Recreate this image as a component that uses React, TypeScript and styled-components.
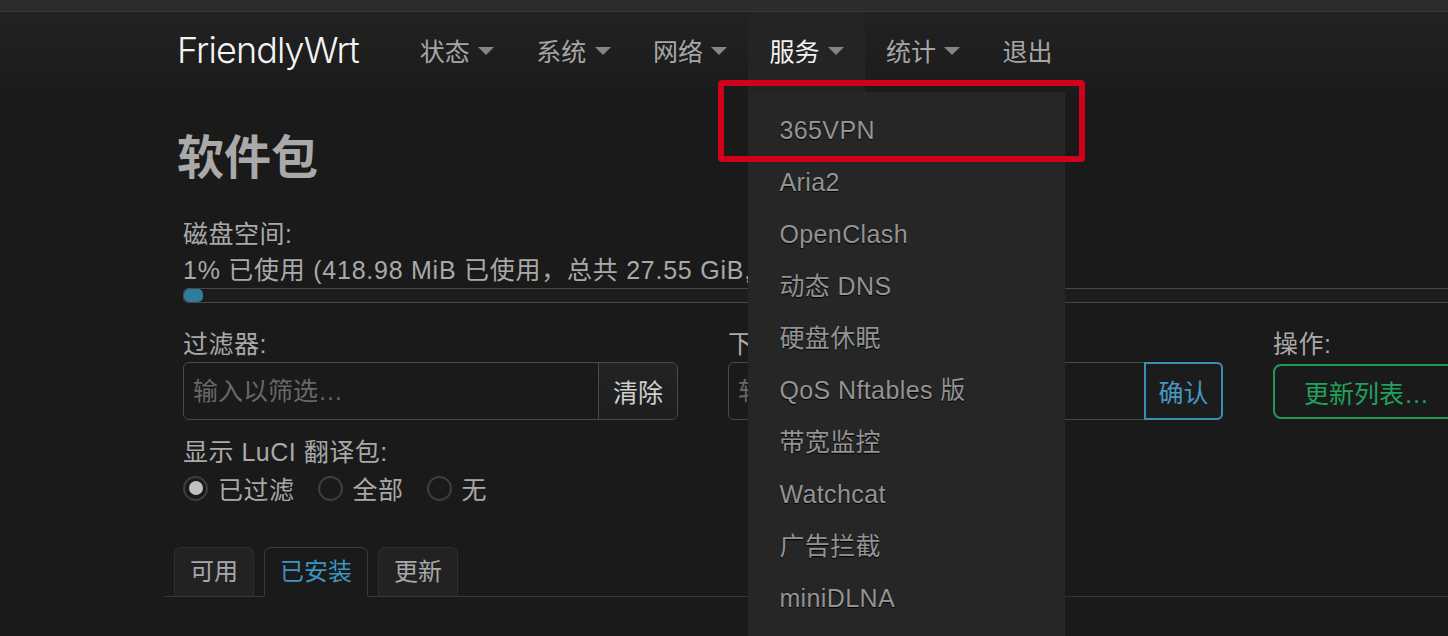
import styled, { createGlobalStyle } from "styled-components";

const GlobalStyle = createGlobalStyle`
  html {
    overflow: hidden;
    background: #1a1a1a;
  }
  body {
    margin: 0;
    padding: 0;
    min-height: 100vh;
    background: #1a1a1a;
    font-family: "Liberation Sans", "Noto Sans CJK SC", sans-serif;
    color: #a9a9a9;
  }
`;

const TopStrip = styled.div`
  height: 11px;
  background: #2c2c2c;
  border-bottom: 1px solid #383838;
`;

const Header = styled.header`
  height: 80px;
  display: flex;
  align-items: stretch;
  padding-left: 177px;
  background: linear-gradient(to bottom, #222222, #1b1b1b);
  position: relative;
  z-index: 5;
`;

const Logo = styled.div`
  font-family: Inter, "Liberation Sans", sans-serif;
  font-weight: 300;
  font-size: 36px;
  letter-spacing: -0.9px;
  color: #f4f4f4;
  line-height: 76px;
  margin-right: 40px;
`;

const NavItem = styled.div<{ $active?: boolean }>`
  position: relative;
  display: flex;
  align-items: center;
  gap: 8.5px;
  padding: 0 21px 5px;
  font-size: 25px;
  color: ${(p) => (p.$active ? "#f2f2f2" : "#a6a6a6")};
  background: ${(p) => (p.$active ? "#242424" : "transparent")};
`;

const Caret = styled.span`
  width: 0;
  height: 0;
  border-left: 8px solid transparent;
  border-right: 8px solid transparent;
  border-top: 8px solid #858585;
  margin-top: 2px;
`;

const Dropdown = styled.ul`
  position: absolute;
  top: 100%;
  left: 0;
  width: 317px;
  margin: 0;
  padding: 12px 0 40px;
  list-style: none;
  background: #262626;
`;

const MenuItem = styled.li`
  height: 52px;
  line-height: 52px;
  padding-left: 31px;
  font-size: 25px;
  letter-spacing: 0.4px;
  color: #939393;
  text-shadow: 0 1px 1px #000;
  white-space: nowrap;
`;

const Highlight = styled.div`
  position: absolute;
  top: -12px;
  left: -30px;
  width: 367px;
  height: 82px;
  box-sizing: border-box;
  border: 6px solid #d0021b;
  border-radius: 4px;
  pointer-events: none;
`;

const Main = styled.main`
  width: 1448px;
  box-sizing: border-box;
  overflow: hidden;
  padding-left: 165px;
`;

const Title = styled.h1`
  margin: 38px 0 0 12px;
  font-size: 47px;
  line-height: 56px;
  font-weight: 700;
  color: #a9a9a9;
`;

const Section = styled.div<{ $top: number }>`
  width: 1585px;
  margin: ${(p) => p.$top}px 0 0 18px;
`;

const Label = styled.div<{ $wide?: boolean }>`
  font-size: 25px;
  line-height: 36px;
  letter-spacing: ${(p) => (p.$wide ? "0.75px" : "0.5px")};
  white-space: nowrap;
`;

const Progress = styled.div`
  height: 15px;
  box-sizing: border-box;
  border: 1px solid #484848;
  border-radius: 5px;
  background: #1d1d1d;
`;

const ProgressFill = styled.div`
  height: 13px;
  background: #2f7c9d;
  border-radius: 5px;
`;

const Columns = styled.div`
  display: grid;
  grid-template-columns: 495px 495px 495px;
  gap: 50px;
`;

const InputGroup = styled.div`
  display: flex;
  height: 58px;
  box-sizing: border-box;
  border: 1px solid #4a4a4a;
  border-radius: 6px;
`;

const Field = styled.input`
  flex: 1;
  min-width: 0;
  background: transparent;
  border: none;
  outline: none;
  padding: 0 9px;
  font: inherit;
  font-size: 25px;
  color: #cccccc;
  &::placeholder {
    color: #686868;
  }
`;

const GroupButton = styled.button<{ $tone?: "blue" }>`
  width: 79px;
  margin: ${(p) => (p.$tone ? "-1px -1px -1px 0" : "0")};
  box-sizing: border-box;
  font: inherit;
  font-size: 25px;
  border: none;
  border-left: 1px solid #4a4a4a;
  border-radius: 0 5px 5px 0;
  background: linear-gradient(to bottom, #232323, #1e1e1e);
  color: #d0d0d0;
  ${(p) =>
    p.$tone === "blue" &&
    `
    border: 2px solid #3a8db3;
    border-radius: 0 6px 6px 0;
    color: #4598c0;
    background: #1c1c1c;
  `}
`;

const ActionButton = styled.button`
  height: 55px;
  margin-top: 2px;
  padding: 0 29px;
  font: inherit;
  font-size: 25px;
  border: 2px solid #1d9b57;
  border-radius: 8px;
  background: #1a1a1a;
  color: #21a15c;
  white-space: nowrap;
`;

const RadioRow = styled.div`
  display: flex;
  align-items: center;
  height: 36px;
  font-size: 25px;
  letter-spacing: 0.5px;
`;

const RadioOption = styled.label`
  display: flex;
  align-items: center;
  gap: 10px;
  margin-right: 23px;
`;

const RadioCircle = styled.span<{ $checked?: boolean }>`
  width: 25px;
  height: 25px;
  box-sizing: border-box;
  border-radius: 50%;
  border: 2px solid #3e3e3e;
  display: flex;
  align-items: center;
  justify-content: center;
  &::after {
    content: "";
    width: 14px;
    height: 14px;
    border-radius: 50%;
    background: ${(p) => (p.$checked ? "#c2c2c2" : "transparent")};
  }
`;

const Tabs = styled.div`
  display: flex;
  gap: 10px;
  margin-top: 41px;
  padding-left: 9px;
  border-bottom: 1px solid #363636;
`;

const Tab = styled.div<{ $active?: boolean }>`
  height: 48px;
  line-height: 48px;
  padding: 0 15px;
  margin-bottom: -1px;
  font-size: 24px;
  border: 1px solid ${(p) => (p.$active ? "#3a3a3a" : "#2e2e2e")};
  border-bottom-color: ${(p) => (p.$active ? "#1a1a1a" : "#363636")};
  border-radius: 7px 7px 0 0;
  background: ${(p) => (p.$active ? "#1a1a1a" : "#222222")};
  color: ${(p) => (p.$active ? "#3b95bf" : "#a9a9a9")};
`;

const nav = [
  { label: "状态", caret: true },
  { label: "系统", caret: true },
  { label: "网络", caret: true },
  { label: "服务", caret: true, active: true },
  { label: "统计", caret: true },
  { label: "退出", caret: false },
];

const services = [
  "365VPN",
  "Aria2",
  "OpenClash",
  "动态 DNS",
  "硬盘休眠",
  "QoS Nftables 版",
  "带宽监控",
  "Watchcat",
  "广告拦截",
  "miniDLNA",
];

export default function App() {
  return (
    <>
      <GlobalStyle />
      <TopStrip />
      <Header>
        <Logo>FriendlyWrt</Logo>
        {nav.map((n) => (
          <NavItem key={n.label} $active={n.active}>
            {n.label}
            {n.caret && <Caret />}
            {n.active && (
              <Dropdown>
                <Highlight />
                {services.map((s) => (
                  <MenuItem key={s}>{s}</MenuItem>
                ))}
              </Dropdown>
            )}
          </NavItem>
        ))}
      </Header>
      <Main>
        <Title>软件包</Title>
        <Section $top={30}>
          <Label>磁盘空间:</Label>
          <Label $wide>1% 已使用 (418.98 MiB 已使用，总共 27.55 GiB, 27.14 GiB 可用)</Label>
          <Progress>
            <ProgressFill style={{ width: "19px" }} />
          </Progress>
        </Section>
        <Section $top={23}>
          <Columns>
            <div>
              <Label>过滤器:</Label>
              <InputGroup>
                <Field placeholder="输入以筛选…" />
                <GroupButton>清除</GroupButton>
              </InputGroup>
            </div>
            <div>
              <Label>下载并安装软件包:</Label>
              <InputGroup>
                <Field placeholder="软件包名或 URL…" />
                <GroupButton $tone="blue">确认</GroupButton>
              </InputGroup>
            </div>
            <div>
              <Label>操作:</Label>
              <ActionButton>更新列表…</ActionButton>
            </div>
          </Columns>
        </Section>
        <Section $top={14}>
          <Label>显示 LuCI 翻译包:</Label>
          <RadioRow>
            <RadioOption>
              <RadioCircle $checked />
              已过滤
            </RadioOption>
            <RadioOption>
              <RadioCircle />
              全部
            </RadioOption>
            <RadioOption>
              <RadioCircle />
              无
            </RadioOption>
          </RadioRow>
        </Section>
        <Tabs>
          <Tab>可用</Tab>
          <Tab $active>已安装</Tab>
          <Tab>更新</Tab>
        </Tabs>
      </Main>
    </>
  );
}
